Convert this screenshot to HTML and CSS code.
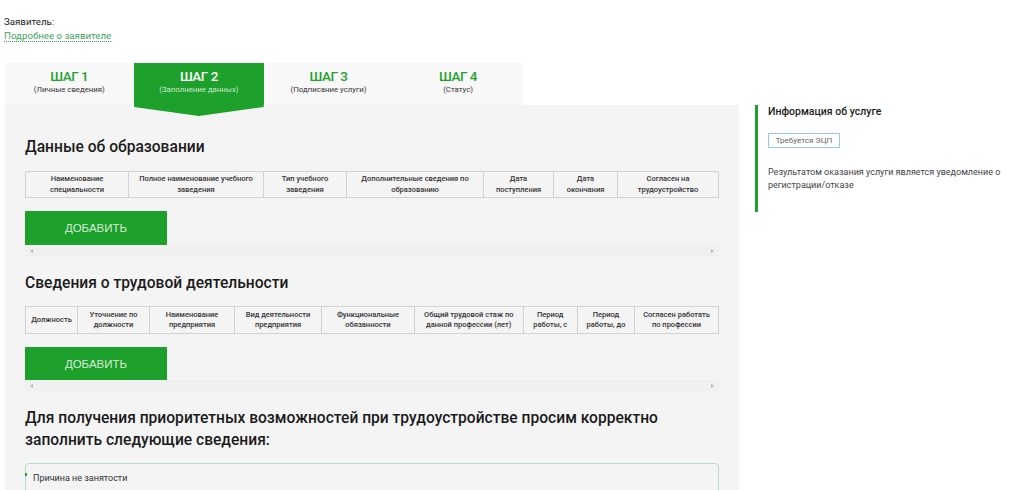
FILE: index.html
```html
<!DOCTYPE html>
<html lang="ru">
<head>
<meta charset="utf-8">
<title>Заполнение данных</title>
<link rel="stylesheet" href="styles.css">
</head>
<body>
<div class="applicant">
  <div>Заявитель:</div>
  <a class="more" href="#">Подробнее о заявителе</a>
</div>
<div class="layout">
  <main class="main">
    <nav class="tabs">
      <div class="tab"><b>ШАГ 1</b><span>(Личные сведения)</span></div>
      <div class="tab active"><b>ШАГ 2</b><span>(Заполнение данных)</span></div>
      <div class="tab"><b>ШАГ 3</b><span>(Подписание услуги)</span></div>
      <div class="tab"><b>ШАГ 4</b><span>(Статус)</span></div>
    </nav>
    <section class="panel">
      <h2 class="h-first">Данные об образовании</h2>
      <div class="grid grid-edu">
        <div>Наименование специальности</div>
        <div>Полное наименование учебного заведения</div>
        <div>Тип учебного заведения</div>
        <div>Дополнительные сведения по образованию</div>
        <div>Дата поступления</div>
        <div>Дата окончания</div>
        <div>Согласен на трудоустройство</div>
      </div>
      <button class="add">ДОБАВИТЬ</button>
      <div class="scroll"><i class="left"></i><i class="right"></i></div>
      <h2 class="h-second">Сведения о трудовой деятельности</h2>
      <div class="grid grid-work">
        <div>Должность</div>
        <div>Уточнение по должности</div>
        <div>Наименование предприятия</div>
        <div>Вид деятельности предприятия</div>
        <div>Функциональные обязанности</div>
        <div>Общий трудовой стаж по данной профессии (лет)</div>
        <div>Период работы, с</div>
        <div>Период работы, до</div>
        <div>Согласен работать по профессии</div>
      </div>
      <button class="add add-short">ДОБАВИТЬ</button>
      <div class="scroll"><i class="left"></i><i class="right"></i></div>
      <h2 class="h-third">Для получения приоритетных возможностей при трудоустройстве просим корректно заполнить следующие сведения:</h2>
      <div class="field"><span class="mark"></span>Причина не занятости</div>
    </section>
  </main>
  <aside class="info">
    <h3>Информация об услуге</h3>
    <span class="badge">Требуется ЭЦП</span>
    <p>Результатом оказания услуги является уведомление о регистрации/отказе</p>
  </aside>
</div>
</body>
</html>
```
FILE: styles.css
```css
html, body { height: 490px; overflow: hidden; }
body {
  margin: 0;
  background: #fff;
  color: #222;
  font-family: Roboto, "Noto Sans", sans-serif;
}
.applicant {
  height: 63px;
  box-sizing: border-box;
  padding: 15px 0 0 4px;
  font-size: 9.7px;
  line-height: 14px;
}
.more {
  color: #3fa45a;
  text-decoration: none;
  border-bottom: 1px dotted #3fa45a;
}
.layout { display: flex; align-items: flex-start; padding-left: 4.5px; }
.main { width: 734.5px; flex: none; }
.tabs {
  display: flex;
  width: 518.5px;
  height: 42px;
  background: #f8f8f8;
}
.tab {
  width: 129.6px;
  position: relative;
  text-align: center;
  padding-top: 5px;
  box-sizing: border-box;
}
.tab b {
  display: block;
  color: #1ea22e;
  font-size: 13.5px;
  line-height: 16px;
  font-weight: 500;
  letter-spacing: -0.5px;
}
.tab span { display: block; font-size: 7.8px; line-height: 11px; color: #333; }
.tab.active { background: #1da02c; }
.tab.active b { color: #fff; }
.tab.active span { color: #c9e8cd; }
.tab.active::after {
  content: "";
  position: absolute;
  left: 0;
  right: 0;
  top: 42px;
  height: 11px;
  background: #1da02c;
  clip-path: polygon(0 0, 100% 0, 100% 2px, 50% 100%, 0 2px);
}
.panel {
  background: #f4f4f4;
  height: 386px;
  padding: 0 20.5px;
  box-sizing: border-box;
  overflow: hidden;
}
h2 {
  margin: 0;
  font-size: 15.6px;
  line-height: 22px;
  font-weight: 500;
  color: #1b1b1b;
}
.h-first { padding-top: 31px; margin-bottom: 13px; }
.h-second { margin-top: 16px; margin-bottom: 12px; }
.h-third { margin-top: 16px; margin-bottom: 12px; }
.grid {
  display: grid;
  width: 694px;
  height: 27px;
  box-sizing: border-box;
  border: 1px solid #d2d2d2;
  border-bottom-width: 1.5px;
}
.grid-edu { grid-template-columns: 102px 135px 83px 137px 70px 64px 1fr; }
.grid-work { grid-template-columns: 51px 72px 85px 87px 93px 108.5px 54.5px 57px 1fr; height: 28px; }
.grid div {
  display: flex;
  align-items: center;
  justify-content: center;
  text-align: center;
  padding: 0 6px;
  font-size: 7.5px;
  line-height: 10.5px;
  font-weight: 500;
  color: #333;
  border-left: 1px solid #d2d2d2;
}
.grid div:first-child { border-left: 0; }
.add {
  display: block;
  width: 142px;
  height: 34px;
  margin-top: 13px;
  padding: 0;
  border: 0;
  background: #1da02c;
  color: #d4eed7;
  font-family: "Liberation Sans", Arial, sans-serif;
  font-size: 11.5px;
}
.add-short { height: 33px; }
.scroll {
  display: flex;
  justify-content: space-between;
  align-items: center;
  width: 694px;
  height: 11px;
  padding: 0 5px;
  box-sizing: border-box;
  background: #f0f0f0;
}
.add-short + .scroll { margin-bottom: 1px; }
.scroll i { width: 0; height: 0; border-top: 2.5px solid transparent; border-bottom: 2.5px solid transparent; }
.left { border-right: 3px solid #b5b5b5; }
.right { border-left: 3px solid #b5b5b5; }
.field {
  position: relative;
  width: 694px;
  height: 60px;
  box-sizing: border-box;
  border: 1.5px solid #bcdcc8;
  border-radius: 4px;
  padding: 8px 7px;
  font-size: 9px;
  line-height: 13px;
  color: #333;
}
.mark {
  position: absolute;
  left: -1.5px;
  top: 9px;
  width: 2px;
  height: 3px;
  background: #1da02c;
}
.info {
  margin-left: 16px;
  margin-top: 42px;
  width: 246px;
  height: 107px;
  box-sizing: border-box;
  border-left: 3px solid #1da02c;
  padding-left: 10px;
}
.info h3 {
  margin: 0;
  font-size: 10.5px;
  line-height: 14px;
  font-weight: 500;
  color: #1b1b1b;
}
.badge {
  display: block;
  width: 72px;
  height: 15px;
  margin-top: 14px;
  box-sizing: border-box;
  border: 1px solid #93cbe6;
  text-align: center;
  font-size: 8px;
  line-height: 13px;
  color: #666;
}
.info p {
  margin: 18px 0 0;
  font-size: 9px;
  line-height: 13px;
  color: #444;
}
```
